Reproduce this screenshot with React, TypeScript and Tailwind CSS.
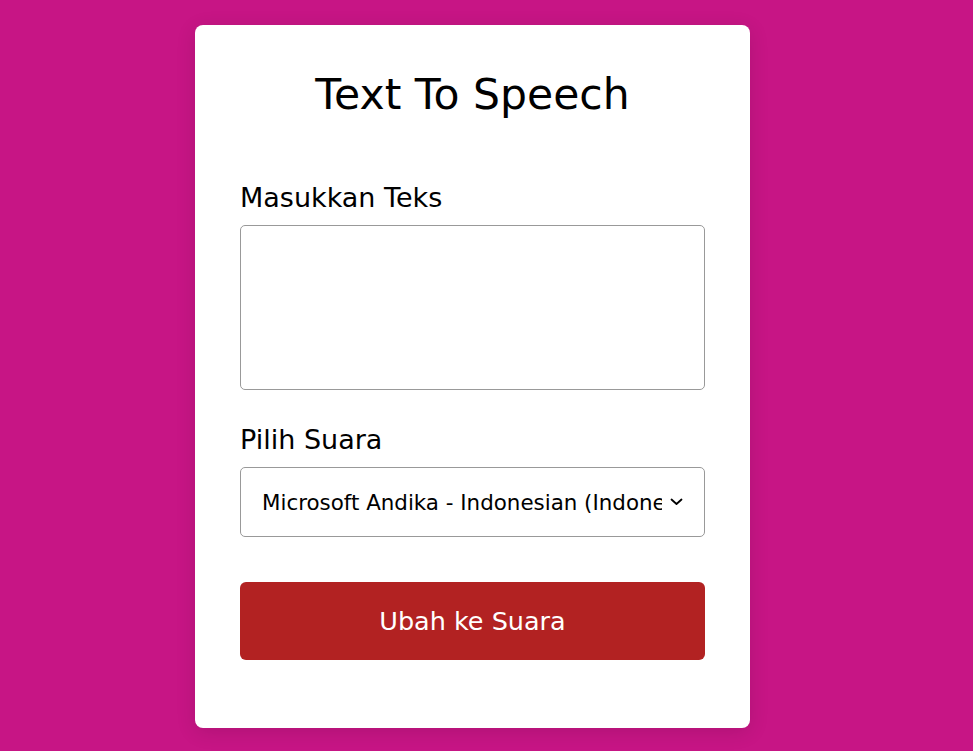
import React from "react";

export default function App() {
  const font = { fontFamily: '"DejaVu Sans", "Liberation Sans", sans-serif' };
  return (
    <div className="min-h-screen w-full bg-[#c71585] pl-[195px] pt-[25px] pb-[23px]" style={font}>
      <div className="flex w-[555px] flex-col rounded-[8px] bg-white px-[45px] pt-[45px] pb-[68px] shadow-[0_4px_20px_rgba(0,0,0,0.12)]">
        <h1 className="text-center text-[42.5px] font-normal leading-[49px] text-black">Text To Speech</h1>
        <label className="mt-[61px] mb-[9px] block text-[27px] leading-[36px] text-black">Masukkan Teks</label>
        <textarea className="block h-[165px] w-full resize-none rounded-[5px] border border-[#999] bg-white p-[10px] text-[18px] outline-none" />
        <label className="mt-[32px] mb-[9px] block text-[27px] leading-[36px] text-black">Pilih Suara</label>
        <div className="relative h-[70px] w-full">
          <select
            className="h-full w-full appearance-none rounded-[5px] border border-[#999] bg-white pl-[21px] pr-[42px] pt-[2px] text-[21.4px] text-black outline-none"
            style={font}
            defaultValue="andika"
          >
            <option value="andika">Microsoft Andika - Indonesian (Indonesia)</option>
            <option value="gadis">Microsoft Gadis Online (Natural) - Indonesian (Indonesia)</option>
          </select>
          <svg
            className="pointer-events-none absolute right-[22px] top-1/2 -translate-y-1/2"
            width="13"
            height="8"
            viewBox="0 0 13 8"
            fill="none"
          >
            <path d="M1.5 1.5 L6.5 6 L11.5 1.5" stroke="#000" strokeWidth="1.8" strokeLinecap="round" strokeLinejoin="round" />
          </svg>
        </div>
        <button className="mt-[45px] h-[78px] w-full rounded-[6px] bg-[#b22222] text-[25.5px] text-white" style={font}>
          Ubah ke Suara
        </button>
      </div>
    </div>
  );
}
